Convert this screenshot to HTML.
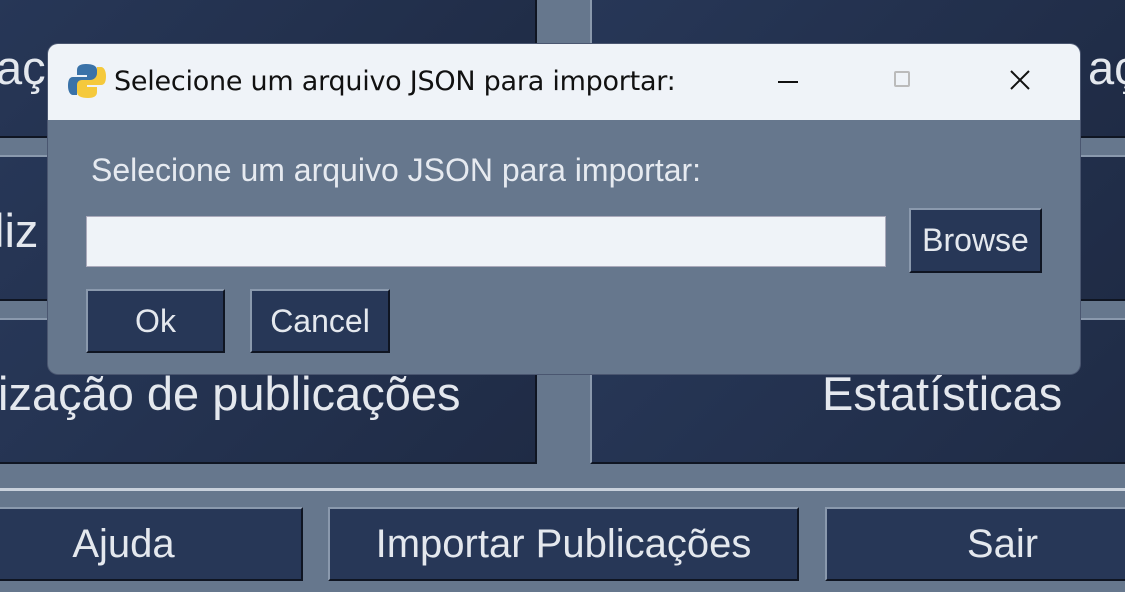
<!DOCTYPE html>
<html><head><meta charset="utf-8"><style>
body{margin:0;width:1125px;height:592px;overflow:hidden;background:#66778d;position:relative;font-family:"Liberation Sans",sans-serif;}
.b{position:absolute;background:linear-gradient(135deg,#273757,#1f2b45);border-top:2px solid #8a99ad;border-left:2px solid #8a99ad;border-right:2px solid #0f1522;border-bottom:2px solid #0f1522;box-sizing:border-box;color:#e4e8ee;display:flex;align-items:center;justify-content:center;font-size:47px;overflow:hidden;white-space:nowrap;}
.b span{position:absolute;}
.s{background:#273757;font-size:40px;}
.d{position:absolute;left:48px;top:44px;width:1032px;height:330px;border-radius:10px;overflow:hidden;background:#66778d;box-shadow:0 0 0 1px #4a5670;}
.t{height:76px;background:#eff3f8;position:relative;}
</style></head><body>
<div class="b" style="left:-4px;top:-4px;width:541px;height:142px"><span style="left:-2px;top:42px">aç</span></div>
<div class="b" style="left:590px;top:-4px;width:540px;height:142px"><span style="left:496px;top:42px">aç</span></div>
<div class="b" style="left:-4px;top:155px;width:541px;height:146px"><span style="left:-4px;top:46px">liz</span></div>
<div class="b" style="left:590px;top:155px;width:540px;height:146px"></div>
<div class="b" style="left:-4px;top:318px;width:541px;height:146px"><span style="left:0px;top:46px">ização de publicações</span></div>
<div class="b" style="left:590px;top:318px;width:540px;height:146px"><span style="left:230px;top:46px">Estatísticas</span></div>
<div style="position:absolute;left:0;top:488px;width:1125px;height:3px;background:#c9d1dc"></div>
<div class="b s" style="left:-56px;top:507px;width:359px;height:74px">Ajuda</div>
<div class="b s" style="left:328px;top:507px;width:471px;height:74px">Importar Publicações</div>
<div class="b s" style="left:825px;top:507px;width:355px;height:74px">Sair</div>
<div class="d">
<div class="t">
<svg style="position:absolute;left:20px;top:18px" width="38" height="38" viewBox="0 0 38 38"><path d="M18 2c-6 0-9 2-9 6v5h10v2H5c-4 0-5 4-5 9s2 9 5 9h4v-6c0-4 3-7 7-7h8c3 0 5-2 5-5V8c0-4-4-6-11-6z" fill="#3a72a8"/><path d="M20 36c6 0 9-2 9-6v-5H19v-2h14c4 0 5-4 5-9s-2-9-5-9h-4v6c0 4-3 7-7 7h-8c-3 0-5 2-5 5v7c0 4 4 6 11 6z" fill="#f5c93c"/></svg>
<div style="position:absolute;left:66px;top:22px;font-size:27px;color:#111;font-family:'DejaVu Sans','Liberation Sans',sans-serif;letter-spacing:-0.25px">Selecione um arquivo JSON para importar:</div>
<div style="position:absolute;left:730px;top:37px;width:20px;height:2px;background:#111"></div>
<div style="position:absolute;left:846px;top:27px;width:16px;height:16px;border:2px solid #bbb;border-radius:2px;box-sizing:border-box"></div>
<svg style="position:absolute;left:962px;top:26px" width="20" height="20"><path d="M1 1L19 19M19 1L1 19" stroke="#111" stroke-width="2"/></svg>
</div>
<div style="position:absolute;left:43px;top:108px;font-size:32px;color:#e6eaf0">Selecione um arquivo JSON para importar:</div>
<div style="position:absolute;left:38px;top:172px;width:798px;height:49px;background:#eff3f8;border:1px solid #aab"></div>
<div class="b s" style="left:861px;top:164px;width:133px;height:65px;font-size:32px">Browse</div>
<div class="b s" style="left:38px;top:245px;width:139px;height:64px;font-size:32px">Ok</div>
<div class="b s" style="left:202px;top:245px;width:140px;height:64px;font-size:32px">Cancel</div>
</div>
</body></html>
